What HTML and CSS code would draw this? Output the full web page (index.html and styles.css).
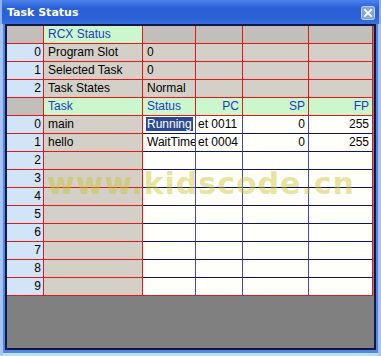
FILE: index.html
```html
<!DOCTYPE html>
<html lang="en">
<head>
    <meta charset="UTF-8">
    <title>Task Status</title>
    <link rel="stylesheet" href="styles.css">
</head>
<body>
    <div class="window">
        <div class="titlebar">
            <span class="title">Task Status</span>
            <svg class="close" width="14" height="14" viewBox="0 0 14 14">
                <rect x="0.5" y="0.5" width="13" height="13" rx="2" fill="#7aa2ee" stroke="#c4d8fb"/>
                <path d="M4 4 L10 10 M10 4 L4 10" stroke="#fff" stroke-width="2" stroke-linecap="square"/>
            </svg>
        </div>

        <div class="client">
            <div class="grid">
                <!-- RCX status section -->
                <div class="cell corner"></div>
                <div class="cell hd">RCX Status</div>
                <div class="cell top"></div>
                <div class="cell top"></div>
                <div class="cell top"></div>
                <div class="cell top"></div>

                <div class="cell num">0</div>
                <div class="cell">Program Slot</div>
                <div class="cell">0</div>
                <div class="cell"></div>
                <div class="cell"></div>
                <div class="cell"></div>

                <div class="cell num">1</div>
                <div class="cell">Selected Task</div>
                <div class="cell">0</div>
                <div class="cell"></div>
                <div class="cell"></div>
                <div class="cell"></div>

                <div class="cell num">2</div>
                <div class="cell">Task States</div>
                <div class="cell">Normal</div>
                <div class="cell"></div>
                <div class="cell"></div>
                <div class="cell"></div>

                <!-- task section -->
                <div class="cell corner"></div>
                <div class="cell hd">Task</div>
                <div class="cell hd">Status</div>
                <div class="cell hd right">PC</div>
                <div class="cell hd right">SP</div>
                <div class="cell hd right">FP</div>

                <div class="cell num">0</div>
                <div class="cell">main</div>
                <div class="cell val status"><span class="sel">Running</span></div>
                <div class="cell val pc">et 0011</div>
                <div class="cell val right">0</div>
                <div class="cell val right last">255</div>

                <div class="cell num">1</div>
                <div class="cell">hello</div>
                <div class="cell val">WaitTime</div>
                <div class="cell val pc">et 0004</div>
                <div class="cell val right">0</div>
                <div class="cell val right last">255</div>
            </div>
            <div class="grid" id="emptyRows"></div>
            <div class="watermark">www.kidscode.cn</div>
        </div>
    </div>

    <script>
        // rows 2..9 have no task yet
        const emptyRows = document.getElementById("emptyRows");
        for (let i = 2; i <= 9; i++) {
            const bottom = i === 9 ? " end" : "";
            emptyRows.innerHTML +=
                `<div class="cell num">${i}</div>` +
                `<div class="cell"></div>` +
                `<div class="cell val${bottom}"></div>` +
                `<div class="cell val${bottom}"></div>` +
                `<div class="cell val${bottom}"></div>` +
                `<div class="cell val last${bottom}"></div>`;
        }
    </script>
</body>
</html>
```

FILE: styles.css
```css
/* Window frame */
body {
    margin: 0;
    background: #ffffff;
}

.window {
    width: 381px;
    height: 356px;
    display: flex;
    flex-direction: column;
    background: #5684e0;
    box-shadow: inset 3px 0 #a4c4f4, inset -3px 0 #a4c4f4, inset 0 -3px #b8e2ec;
    box-sizing: border-box;
}

.titlebar {
    height: 24px;
    flex-shrink: 0;
    display: flex;
    align-items: center;
    justify-content: space-between;
    padding: 0 6px 0 7px;
    background: linear-gradient(#4a82ec, #2a5fd6 35%, #2c62d8 75%, #3a6fe0);
    box-shadow: inset 2px 0 #8fb2f2, inset -2px 0 #8fb2f2;
}

.title {
    font-family: "DejaVu Sans", sans-serif;
    font-weight: bold;
    font-size: 11px;
    color: #ffffff;
    margin-top: 1px;
}

.close {
    display: block;
    margin-top: 2px;
}

.client {
    position: relative;
    flex: 1;
    margin: 0 5px 6px;
    border: 2px solid #0c1848;
    background: #808080;
}

/* Grid */
.grid {
    display: grid;
    grid-template-columns: 37px 99px 53px 47px 66px 64px;
    font-family: "Liberation Sans", Arial, sans-serif;
    font-size: 12px;
    color: #000;
}

.cell {
    height: 18px;
    box-sizing: border-box;
    padding: 0 3px 0 4px;
    line-height: 17px;
    white-space: nowrap;
    overflow: hidden;
    background: #d4d0c8;
    border-right: 1px solid #e31818;
    border-bottom: 1px solid #e31818;
}

.num {
    background: #d2e4f8;
    text-align: right;
    padding-right: 2px;
}

.corner {
    background: #c2bfba;
}

.top {
    background: #c2bfba;
}

.hd {
    background: #ccf6cc;
    color: #1a3cc4;
}

.right {
    text-align: right;
    padding-right: 3px;
}

.val {
    background: #fffffb;
    border-right-color: #4848c4;
    border-bottom-color: #10106e;
}

.val.last {
    border-right-color: #e31818;
}

.val.end {
    border-bottom-color: #e31818;
}

.status {
    padding-left: 3px;
}

.pc {
    padding-left: 2px;
}

.sel {
    background: #2a4898;
    color: #ffffff;
    padding: 0 1px;
}

.watermark {
    position: absolute;
    left: 40px;
    top: 143px;
    font-family: "DejaVu Sans", sans-serif;
    font-weight: bold;
    font-size: 30px;
    line-height: 30px;
    letter-spacing: 1px;
    color: rgba(200, 195, 40, 0.45);
    pointer-events: none;
}
```
